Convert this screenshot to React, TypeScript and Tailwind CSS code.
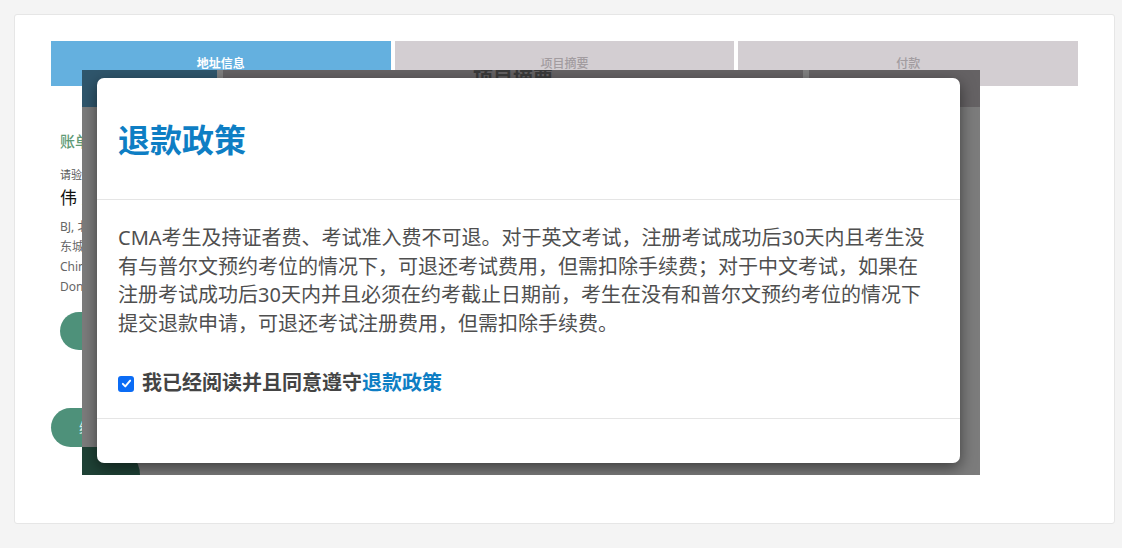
const font = { fontFamily: '"Noto Sans", "Noto Sans CJK SC", sans-serif' };

const policyLines = [
    "CMA考生及持证者费、考试准入费不可退。对于英文考试，注册考试成功后30天内且考生没",
    "有与普尔文预约考位的情况下，可退还考试费用，但需扣除手续费；对于中文考试，如果在",
    "注册考试成功后30天内并且必须在约考截止日期前，考生在没有和普尔文预约考位的情况下",
    "提交退款申请，可退还考试注册费用，但需扣除手续费。",
];

function Tab({ label, active }: { label: string; active?: boolean }) {
    return (
        <div
            className={
                active
                    ? "flex h-[45px] flex-1 items-center justify-center bg-[#64b0df] text-[12px] font-bold text-white"
                    : "flex h-[45px] flex-1 items-center justify-center bg-[#d3ced2] text-[12px] font-medium text-[#a29ca0]"
            }
        >
            {label}
        </div>
    );
}

export default function App() {
    return (
        <div className="min-h-[548px] w-[1122px] bg-[#f4f4f4] pl-[14px] pt-[14px]" style={font}>
            <div className="relative h-[510px] w-[1101px] rounded-[3px] border border-[#e6e6e6] bg-white px-[36px] pt-[26px]">
                {/* page behind the dialog */}
                <div className="flex gap-[4px]">
                    <Tab label="地址信息" active />
                    <Tab label="项目摘要" />
                    <Tab label="付款" />
                </div>

                <div className="pl-[9px] pt-[44px]">
                    <div className="text-[15px] font-medium text-[#5f9a76]">账单地址</div>
                    <div className="mt-[14px] text-[11px] text-[#555]">请验证您的地址</div>
                    <div className="mt-[2px] text-[17px] text-[#111]">伟 王</div>
                    <div className="mt-[6px] space-y-[1px] text-[12px] leading-[19px] text-[#666]">
                        <div>BJ, 北京</div>
                        <div>东城区</div>
                        <div>China</div>
                        <div>Dongcheng</div>
                    </div>
                    <div className="mt-[16px] flex h-[38px] w-[120px] items-center justify-start rounded-full bg-[#4e917a] pl-[30px] text-[14px] text-white">
                        编辑
                    </div>
                </div>
                <div className="mt-[58px] flex h-[39px] w-[140px] items-center justify-start rounded-full bg-[#4e917a] pl-[28px] text-[14px] text-[#dff0ea]">
                    继续
                </div>

                {/* dialog with its backdrop */}
                <div className="absolute left-[67px] top-[55px] h-[405px] w-[898px] overflow-hidden bg-[#7c7c7c]">
                    <div className="absolute inset-x-0 top-0 flex h-[37px] gap-[6px] bg-[#808080]">
                        <div className="w-[135px] bg-[#2f566c]" />
                        <div className="flex w-[580px] justify-center bg-[#656264]">
                            <span className="-mt-[6px] text-[20px] font-bold text-[#3a3a3a]">项目摘要</span>
                        </div>
                        <div className="flex-1 bg-[#656264]" />
                    </div>
                    <div className="absolute bottom-0 left-0 h-[28px] w-[58px] rounded-tr-[40px] bg-[#1f4236]" />

                    <div className="relative ml-[15px] mt-[8px] w-[863px] rounded-[7px] bg-white shadow-[0_5px_15px_rgba(0,0,0,0.5)]">
                        <div className="h-[122px] border-b border-[#e5e5e5] px-[21px] pt-[44px]">
                            <h3 className="text-[32px] font-bold leading-[36px] text-[#0e7ec4]">退款政策</h3>
                        </div>
                        <div className="px-[21px] pb-[20px] pt-[24px]">
                            <p className="text-[20px] leading-[28.6px] text-[#4f4f4f]">
                                {policyLines.map((line) => (
                                    <span key={line} className="block whitespace-nowrap">
                                        {line}
                                    </span>
                                ))}
                            </p>
                            <label className="mt-[31px] flex items-center gap-[8px] text-[20px] font-bold leading-[28.6px] text-[#444]">
                                <span className="flex h-[16px] w-[16px] items-center justify-center rounded-[3px] bg-[#0b6cf5]">
                                    <svg viewBox="0 0 16 16" className="h-[13px] w-[13px]" fill="none">
                                        <path d="M3.5 8.5l3 3 6-7" stroke="white" strokeWidth="2.4" strokeLinecap="round" strokeLinejoin="round" />
                                    </svg>
                                </span>
                                <span>
                                    我已经阅读并且同意遵守<span className="text-[#0e7ec4]">退款政策</span>
                                </span>
                            </label>
                        </div>
                        <div className="h-[45px] border-t border-[#e5e5e5]" />
                    </div>
                </div>
            </div>
        </div>
    );
}
